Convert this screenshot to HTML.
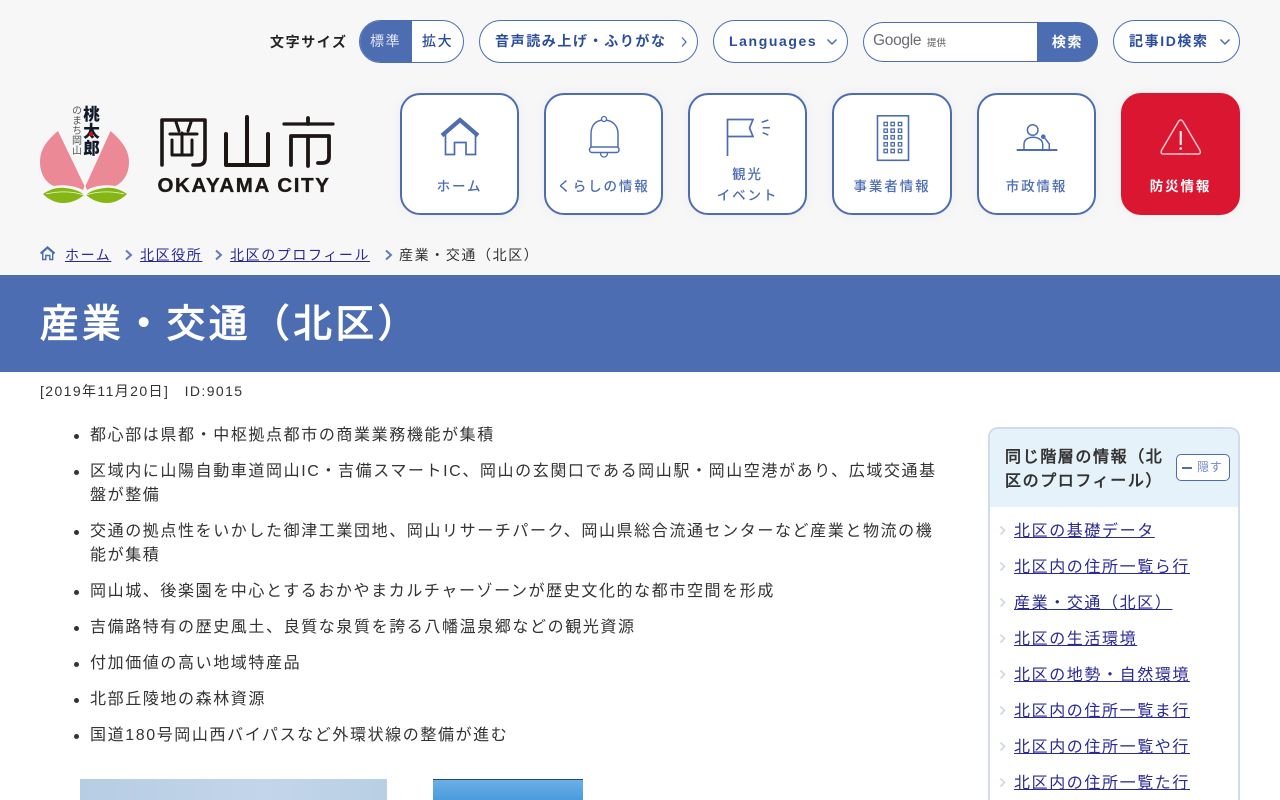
<!DOCTYPE html>
<html lang="ja"><head><meta charset="utf-8"><title>産業・交通（北区）</title>
<style>
*{box-sizing:border-box}
html{margin:0;padding:0;background:#fff;width:1280px;height:800px;overflow:hidden}
body{margin:0;padding:0;background:#fff;width:1280px;height:800px;overflow:hidden;position:relative;font-family:"Liberation Sans","WenQuanYi Zen Hei",sans-serif;color:#333}
.a{position:absolute;white-space:nowrap}
.d{font-family:"WenQuanYi Zen Hei","Noto Sans CJK JP",sans-serif;line-height:0}
#hd{position:absolute;left:0;top:0;width:1280px;height:275px;background:#f7f7f7}
.pill{position:absolute;top:20px;height:43px;border:1px solid #4d6db3;border-radius:22px;background:#fff;color:#2a4d9c;font-family:"Liberation Sans","Noto Sans CJK JP",sans-serif;font-weight:700;font-size:14px;letter-spacing:1.6px;line-height:41px}
.nav{position:absolute;top:93px;height:122px;background:#fff;border:2px solid #4d6db3;border-radius:20px;box-shadow:0 0 12px rgba(60,80,130,.06);color:#4d6db3;font-family:"Liberation Sans","Noto Sans CJK JP",sans-serif;font-size:13.5px;font-weight:500;letter-spacing:1.9px;text-align:center;line-height:22px}
.nav span{position:absolute;left:0;right:0}
.nav svg{position:absolute;left:0;top:0}
ul{margin:0;padding:0}
#main li{position:absolute;left:90px;width:850px;font-size:16px;letter-spacing:1.6px;line-height:24px;list-style:none;color:#333}
#main li:before{content:"";position:absolute;left:-16px;top:10px;width:5px;height:5px;border-radius:50%;background:#333}
#side a{position:absolute;left:1014px;font-size:16px;letter-spacing:1.6px;color:#2a2a96;text-decoration:underline;white-space:nowrap;line-height:24px}
.crumb{position:absolute;top:245px;font-size:14px;letter-spacing:1.6px;line-height:20px;white-space:nowrap;color:#2a2a96;text-decoration:underline}
</style></head><body>
<div id="hd"></div>
<div class="a" style="left:270px;top:32px;font-family:'Liberation Sans','Noto Sans CJK JP',sans-serif;font-size:14px;font-weight:700;letter-spacing:1.6px;line-height:20px;color:#222">文字サイズ</div>
<div class="pill" style="left:359px;width:105px;overflow:hidden">
<div class="a" style="left:-1px;top:-1px;width:53px;height:43px;background:#4d6db3;color:#dfe6f5;font-weight:400;line-height:43px;text-indent:11px">標準</div>
<div class="a" style="left:62px;top:0;font-weight:500">拡大</div></div>
<div class="pill" style="left:479px;width:219px"><span class="a" style="left:15px;top:0">音声読み上げ<span style="font-family:'Noto Sans CJK JP',sans-serif;line-height:0">・</span>ふりがな</span>
<svg class="a" style="left:200px;top:15px" width="10" height="12" viewBox="0 0 10 12"><path d="M2 1.500 6 6 2 10.500" fill="none" stroke="#4d6db3" stroke-width="1.300"/></svg></div>
<div class="pill" style="left:713px;width:135px;font-family:'Liberation Sans',sans-serif;letter-spacing:1.6px"><span class="a" style="left:15px;top:0">Languages</span>
<svg class="a" style="left:112px;top:16px" width="12" height="10" viewBox="0 0 12 10"><path d="M1.500 2.500 6 7 10.500 2.500" fill="none" stroke="#4d6db3" stroke-width="1.500"/></svg></div>
<div class="a" style="left:863px;top:22px;width:190px;height:40px;border:1px solid #4d6db3;border-right:0;border-radius:20px 0 0 20px;background:#fff">
<span class="a" style="left:9px;top:8px;font-size:15.500px;letter-spacing:-.3px;line-height:20px;color:#6b6b70">Google</span>
<span class="a" style="left:63px;top:11px;font-family:'Noto Sans CJK JP',sans-serif;font-size:9.500px;line-height:16px;color:#555">提供</span></div>
<div class="a" style="left:1037px;top:22px;width:61px;height:40px;background:#4d6db3;border-radius:0 20px 20px 0;color:#fff;font-family:'Noto Sans CJK JP',sans-serif;font-size:14px;font-weight:700;letter-spacing:1.600px;line-height:40px;text-align:center">検索</div>
<div class="pill" style="left:1113px;width:127px"><span class="a" style="left:15px;top:0">記事ID検索</span>
<svg class="a" style="left:105px;top:16px" width="12" height="10" viewBox="0 0 12 10"><path d="M1.500 2.500 6 7 10.500 2.500" fill="none" stroke="#4d6db3" stroke-width="1.500"/></svg></div>

<svg class="a" style="left:0;top:80px;font-family:'Liberation Sans','Noto Sans CJK JP',sans-serif" width="380" height="150" viewBox="0 80 380 150">
<path d="M58 131C46 141 40 150 40 162C40 174 46 183 54 186C65 184 75 186 83 190L84.500 186Z" fill="#ec8997"/>
<path d="M110.500 131C122 141 129 150 129 162C129 174 123 183 115 186C104 184 94 186 87 190L85.500 186Z" fill="#ec8997"/>
<path d="M43 194C50 189 58 187 65 188C74 189 80 191 84 195C78 200 71 203 63 203C55 203 48 199 43 194Z" fill="#85b614"/>
<path d="M127 194C120 189 112 187 105 188C96 189 90 191 86 195C92 200 99 203 107 203C115 203 122 199 127 194Z" fill="#85b614"/>
<path d="M46 194C58 191 72 191 84 195M124 194C112 191 98 191 86 195" stroke="#eef5d8" stroke-width=".8" fill="none"/>
<text x="71" y="105" font-size="10" fill="#555" style="writing-mode:vertical-rl" transform="translate(4 0)">のまち岡山</text>
<g font-size="16.500" font-weight="900" fill="#101a2b" text-anchor="middle"><text x="91.500" y="120">桃</text><text x="91.500" y="137">太</text><text x="91.500" y="154">郎</text></g>
<circle cx="91" cy="134" r="2" fill="#e00"/>
<g fill="none" stroke="#1c1715" stroke-linecap="round" stroke-linejoin="round">
<path stroke-width="3.600" d="M162 165V120H205V158Q205 165 198 165H193"/>
<path stroke-width="3" d="M176 122 179 131M191 122 188 131M170 134H197M172 140V155H192M182 133V155M192 140V155"/>
<path stroke-width="4" d="M226 134V165H268V134M247 117V165"/>
<path stroke-width="3.200" d="M284 124H333"/>
<path stroke-width="3.800" d="M308 118V124M291 136V165M291 136H329V157Q329 163 322 163H318M308 136V166"/>
</g>
<text x="157.500" y="192" font-size="20.500" font-weight="700" letter-spacing="1.600" fill="#1c1715" stroke="#1c1715" stroke-width=".35">OKAYAMA CITY</text>
</svg>

<div class="nav" style="left:400px;width:119px"><svg width="115" height="118" viewBox="402 95 115 118"><path d="M442 135.500 460 120 478 135.500" fill="none" stroke="#4d6db3" stroke-width="4.200"/><path d="M445.500 133V154.500H454.500V142.500H466V154.500H475.500V133" fill="none" stroke="#4d6db3" stroke-width="1.700"/></svg><span style="top:81px">ホーム</span></div>
<div class="nav" style="left:544px;width:119px"><svg width="115" height="118" viewBox="546 95 115 118"><path d="M591 147V134C591 125 596 120 604 120C612 120 618 125 618 134V147" fill="none" stroke="#4d6db3" stroke-width="1.500"/><circle cx="604" cy="119" r="2.500" fill="#fff" stroke="#4d6db3" stroke-width="1.300"/><rect x="589.500" y="147" width="29.500" height="5.500" rx="2.500" fill="none" stroke="#4d6db3" stroke-width="1.500"/><path d="M600.500 153C600.500 158.500 607.500 158.500 607.500 153" fill="none" stroke="#4d6db3" stroke-width="1.300"/></svg><span style="top:81px">くらしの情報</span></div>
<div class="nav" style="left:688px;width:119px"><svg width="115" height="118" viewBox="690 95 115 118"><path d="M727.500 156V119.500H753L749.500 128 753 136.500H727.500" fill="none" stroke="#4d6db3" stroke-width="1.700"/><path d="M761.700 122.300 768.300 120M762.700 127.700H770M762.700 132.700 768.300 135" fill="none" stroke="#4d6db3" stroke-width="1.500"/></svg><span style="top:69px">観光</span><span style="top:90px">イベント</span></div>
<div class="nav" style="left:832px;width:120px"><svg width="116" height="118" viewBox="834 95 116 118"><rect x="877.500" y="115.800" width="31" height="44.500" fill="none" stroke="#4d6db3" stroke-width="1.600"/><g fill="none" stroke="#4d6db3" stroke-width="1.300"><rect x="884" y="122.300" width="3.400" height="3.400"/><rect x="891" y="122.300" width="3.400" height="3.400"/><rect x="898.300" y="122.300" width="3.400" height="3.400"/><rect x="884" y="129" width="3.400" height="3.400"/><rect x="891" y="129" width="3.400" height="3.400"/><rect x="898.300" y="129" width="3.400" height="3.400"/><rect x="884" y="135.600" width="3.400" height="3.400"/><rect x="891" y="135.600" width="3.400" height="3.400"/><rect x="898.300" y="135.600" width="3.400" height="3.400"/><rect x="884" y="142.600" width="3.400" height="3.400"/><rect x="891" y="142.600" width="3.400" height="3.400"/><rect x="898.300" y="142.600" width="3.400" height="3.400"/><rect x="884" y="149.300" width="3.400" height="3.400"/><rect x="891" y="149.300" width="3.400" height="3.400"/><rect x="898.300" y="149.300" width="3.400" height="3.400"/></g></svg><span style="top:81px">事業者情報</span></div>
<div class="nav" style="left:977px;width:119px"><svg width="115" height="118" viewBox="979 95 115 118"><circle cx="1032.700" cy="130" r="5.300" fill="none" stroke="#4d6db3" stroke-width="1.500"/><path d="M1016.700 150H1057.300" fill="none" stroke="#4d6db3" stroke-width="2"/><path d="M1024 150V144C1024 135 1042 135 1042.700 144V150" fill="none" stroke="#4d6db3" stroke-width="1.500"/><circle cx="1043.300" cy="136.700" r="2.300" fill="#4d6db3"/><path d="M1045 138.300 1049.300 144V150" fill="none" stroke="#4d6db3" stroke-width="1.500"/></svg><span style="top:81px">市政情報</span></div>
<div class="nav" style="left:1121px;width:119px;background:#db1631;border-color:#db1631;color:#fff;font-weight:700"><svg width="115" height="118" viewBox="1123 95 115 118"><path d="M1178.500 121.500Q1180.700 118.500 1183 121.500L1199.800 150Q1201.500 154 1198 154H1163.500Q1160 154 1161.700 150Z" fill="none" stroke="#f5c9cf" stroke-width="1.500" stroke-linejoin="round"/><path d="M1180.700 131V145" stroke="#fff" stroke-width="2"/><circle cx="1180.700" cy="148.500" r="1.300" fill="#fff"/></svg><span style="top:81px">防災情報</span></div>

<svg class="a" style="left:40px;top:245px" width="16" height="17" viewBox="0 0 16 17"><path d="M.700 8.500 7.500 2.500 14.500 8.500" fill="none" stroke="#4d6db3" stroke-width="2.200"/><path d="M2.700 7.500V14.500H5.800V10.500H9.800V14.500H12.700V7.500" fill="none" stroke="#4d6db3" stroke-width="1.400"/></svg>
<a class="crumb" style="left:65px">ホーム</a>
<a class="crumb" style="left:140px">北区役所</a>
<a class="crumb" style="left:230px">北区のプロフィール</a>
<span class="crumb" style="left:399px;color:#333;text-decoration:none">産業<span class="d">・</span>交通（北区）</span>
<svg class="a" style="left:124px;top:248px" width="10" height="14" viewBox="0 0 10 14"><path d="M2 2.500 7 7 2 11.500" fill="none" stroke="#5f7cbb" stroke-width="2"/></svg>
<svg class="a" style="left:214px;top:248px" width="10" height="14" viewBox="0 0 10 14"><path d="M2 2.500 7 7 2 11.500" fill="none" stroke="#5f7cbb" stroke-width="2"/></svg>
<svg class="a" style="left:384px;top:248px" width="10" height="14" viewBox="0 0 10 14"><path d="M2 2.500 7 7 2 11.500" fill="none" stroke="#5f7cbb" stroke-width="2"/></svg>

<div class="a" style="left:0;top:275px;width:1280px;height:97px;background:#4d6db3"></div>
<div class="a" style="left:40px;top:298px;font-size:38.400px;font-weight:700;letter-spacing:3.840px;line-height:54px;color:#fff">産業<span class="d">・</span>交通（北区）</div>
<div class="a" style="left:40px;top:382px;font-size:14px;letter-spacing:1.400px;line-height:19px;color:#333">[2019年11月20日]　ID:9015</div>

<ul id="main">
<li style="top:424px">都心部は県都<span class="d">・</span>中枢拠点都市の商業業務機能が集積</li>
<li style="top:460px">区域内に山陽自動車道岡山IC<span class="d">・</span>吉備スマートIC、岡山の玄関口である岡山駅<span class="d">・</span>岡山空港があり、広域交通基盤が整備</li>
<li style="top:520px">交通の拠点性をいかした御津工業団地、岡山リサーチパーク、岡山県総合流通センターなど産業と物流の機能が集積</li>
<li style="top:580px">岡山城、後楽園を中心とするおかやまカルチャーゾーンが歴史文化的な都市空間を形成</li>
<li style="top:616px">吉備路特有の歴史風土、良質な泉質を誇る八幡温泉郷などの観光資源</li>
<li style="top:652px">付加価値の高い地域特産品</li>
<li style="top:688px">北部丘陵地の森林資源</li>
<li style="top:724px">国道180号岡山西バイパスなど外環状線の整備が進む</li>
</ul>
<div class="a" style="left:80px;top:779px;width:307px;height:21px;background:linear-gradient(90deg,#b6cde3,#c3d5ea 60%,#b8cfe4)"></div>
<div class="a" style="left:433px;top:779px;width:150px;height:21px;background:linear-gradient(#2b4a66 0,#2b4a66 1px,#6ab0e6 1px,#4a9bdd)"></div>

<div class="a" style="left:988px;top:427px;width:252px;height:373px;border:2px solid #d0dcec;border-bottom:0;border-radius:10px 10px 0 0;background:#fff;overflow:hidden">
<div class="a" style="left:0;top:0;width:248px;height:78px;background:#e6f2fa"></div>
<div style="position:absolute;left:15px;top:17px;width:165px;white-space:normal;font-size:16px;font-weight:700;letter-spacing:1.600px;line-height:24px;color:#333">同じ階層の情報（北区のプロフィール）</div>
<div class="a" style="left:186px;top:25px;width:54px;height:27px;border:1px solid #4d6db3;border-radius:5px;background:#fff;color:#6f8ac4;font-size:12px;letter-spacing:.8px;line-height:25px;padding-left:20px">隠す<i class="a" style="left:5px;top:12px;width:10px;height:2px;background:#4d6db3"></i></div>
</div>
<div id="side">
<a style="top:520px">北区の基礎データ</a>
<a style="top:556px">北区内の住所一覧ら行</a>
<a style="top:592px">産業<span class="d">・</span>交通（北区）</a>
<a style="top:628px">北区の生活環境</a>
<a style="top:664px">北区の地勢<span class="d">・</span>自然環境</a>
<a style="top:700px">北区内の住所一覧ま行</a>
<a style="top:736px">北区内の住所一覧や行</a>
<a style="top:772px">北区内の住所一覧た行</a>
</div>
<svg class="a" style="left:999px;top:525px" width="8" height="270" viewBox="0 0 8 270" fill="none" stroke="#cdd8e8" stroke-width="1.600"><path d="M1.500 1.500 5.500 5.500 1.500 9.500M1.500 37.500 5.500 41.500 1.500 45.500M1.500 73.500 5.500 77.500 1.500 81.500M1.500 109.500 5.500 113.500 1.500 117.500M1.500 145.500 5.500 149.500 1.500 153.500M1.500 181.500 5.500 185.500 1.500 189.500M1.500 217.500 5.500 221.500 1.500 225.500M1.500 253.500 5.500 257.500 1.500 261.500"/></svg>
</body></html>
